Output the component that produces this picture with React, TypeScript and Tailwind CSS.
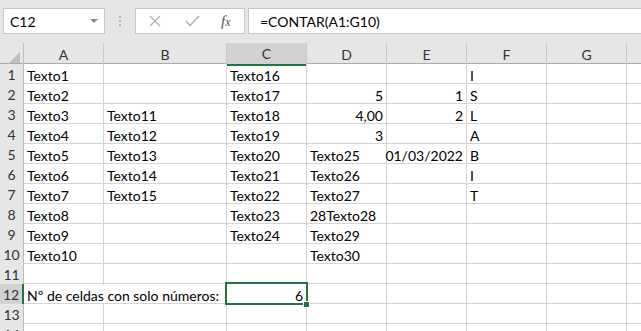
import React from 'react';

type Cell = { v: string; right?: boolean };

const cols = ['A', 'B', 'C', 'D', 'E', 'F', 'G', ''];

const t = (v: string): Cell => ({ v });
const n = (v: string): Cell => ({ v, right: true });
const e: Cell = { v: '' };

const rows: Cell[][] = [
  [t('Texto1'), e, t('Texto16'), e, e, t('I'), e, e],
  [t('Texto2'), e, t('Texto17'), n('5'), n('1'), t('S'), e, e],
  [t('Texto3'), t('Texto11'), t('Texto18'), n('4,00'), n('2'), t('L'), e, e],
  [t('Texto4'), t('Texto12'), t('Texto19'), n('3'), e, t('A'), e, e],
  [t('Texto5'), t('Texto13'), t('Texto20'), t('Texto25'), n('01/03/2022'), t('B'), e, e],
  [t('Texto6'), t('Texto14'), t('Texto21'), t('Texto26'), e, t('I'), e, e],
  [t('Texto7'), t('Texto15'), t('Texto22'), t('Texto27'), e, t('T'), e, e],
  [t('Texto8'), e, t('Texto23'), t('28Texto28'), e, e, e, e],
  [t('Texto9'), e, t('Texto24'), t('Texto29'), e, e, e, e],
  [t('Texto10'), e, e, t('Texto30'), e, e, e, e],
  [e, e, e, e, e, e, e, e],
  [t('Nº de celdas con solo números:'), e, n('6'), e, e, e, e, e],
  [e, e, e, e, e, e, e, e],
  [e, e, e, e, e, e, e, e],
];

const font = { fontFamily: 'Lato, "Open Sans", sans-serif' };

export default function App() {
  return (
    <div className="w-[641px] h-[331px] overflow-hidden bg-white text-black" style={font}>
      {/* formula bar */}
      <div className="h-[43px] bg-[#e6e6e6] flex items-start pt-[8px]">
        <div className="ml-[3px] w-[102px] h-[26px] bg-white border border-[#c6c6c6] flex items-center justify-between pl-[6px] pr-[6px] text-[14px]">
          <span>C12</span>
          <svg width="8" height="5" viewBox="0 0 8 5">
            <path d="M0 0 L8 0 L4 4 Z" fill="#8a8a8a" />
          </svg>
        </div>
        <div className="w-[30px] h-[26px] flex flex-col items-center justify-center gap-[2px]">
          <span className="w-[2px] h-[2px] bg-[#b5b5b5]" />
          <span className="w-[2px] h-[2px] bg-[#b5b5b5]" />
          <span className="w-[2px] h-[2px] bg-[#b5b5b5]" />
        </div>
        <div className="w-[110px] h-[26px] bg-white border border-[#c6c6c6] flex items-center">
          <svg className="ml-[13px]" width="12" height="12" viewBox="0 0 12 12">
            <path d="M1 1 L11 11 M11 1 L1 11" stroke="#b3b3b3" strokeWidth="1.4" fill="none" />
          </svg>
          <svg className="ml-[24px]" width="15" height="12" viewBox="0 0 15 12">
            <path d="M1 6 L5 10.5 L14 1" stroke="#b3b3b3" strokeWidth="1.6" fill="none" />
          </svg>
          <span
            className="ml-[21px] text-[15px] italic text-[#555]"
            style={{ fontFamily: '"Liberation Serif", serif' }}
          >
            f<span className="text-[12px]">x</span>
          </span>
        </div>
        <div className="ml-[3px] flex-1 h-[26px] bg-white border border-r-0 border-[#c6c6c6] flex items-center pl-[11px] text-[14px]">
          =CONTAR(A1:G10)
        </div>
      </div>

      {/* header row */}
      <div className="grid grid-cols-[24px_80px_123px_80px_80px_80px_80px_80px_1fr] h-[21px] bg-[#e6e6e6] border-b border-[#ababab]">
        <div className="border-r border-[#bdbdbd] relative overflow-hidden">
          <svg className="absolute right-[3px] bottom-[3px]" width="11" height="11" viewBox="0 0 11 11">
            <path d="M11 0 L11 11 L0 11 Z" fill="#c0c0c0" />
          </svg>
        </div>
        {cols.map((c, i) => (
          <div
            key={i}
            className={`flex items-center justify-center text-[14px] text-[#333] ${
              i < 7 ? 'border-r border-[#c8c8c8]' : ''
            } ${c === 'C' ? 'bg-[#d2d2d2] border-b-2 border-b-[#217346]' : ''}`}
          >
            {c}
          </div>
        ))}
      </div>

      {/* rows */}
      {rows.map((r, ri) => (
        <div
          key={ri}
          className="grid grid-cols-[24px_80px_123px_80px_80px_80px_80px_80px_1fr] h-[20px] border-b border-[#d4d4d4]"
        >
          <div
            className={`flex items-center justify-center text-[14px] text-[#333] border-r ${
              ri === 11 ? 'bg-[#d2d2d2] border-r-2 border-r-[#217346]' : 'bg-[#e6e6e6] border-[#bdbdbd]'
            }`}
          >
            {ri + 1}
          </div>
          {r.map((c, ci) => {
            const overflowCell = ri === 11 && ci === 0;
            const selected = ri === 11 && ci === 2;
            return (
              <div
                key={ci}
                className={`relative flex items-end text-[14px] leading-[18px] ${
                  c.right ? 'justify-end pr-[3px]' : 'pl-[3px]'
                } ${overflowCell ? 'z-10' : ''} ${selected ? 'z-20' : ''} ${
                  overflowCell || ci === 7 ? '' : 'border-r border-[#d4d4d4]'
                }`}
              >
                <span className="whitespace-nowrap">{c.v}</span>
                {selected && (
                  <>
                    <div className="absolute left-[-2px] top-[-2px] w-[83px] h-[23px] border-2 border-[#217346]" />
                    <div className="absolute left-[76px] top-[17px] w-[7px] h-[7px] bg-[#217346] border border-white" />
                  </>
                )}
              </div>
            );
          })}
        </div>
      ))}
    </div>
  );
}
